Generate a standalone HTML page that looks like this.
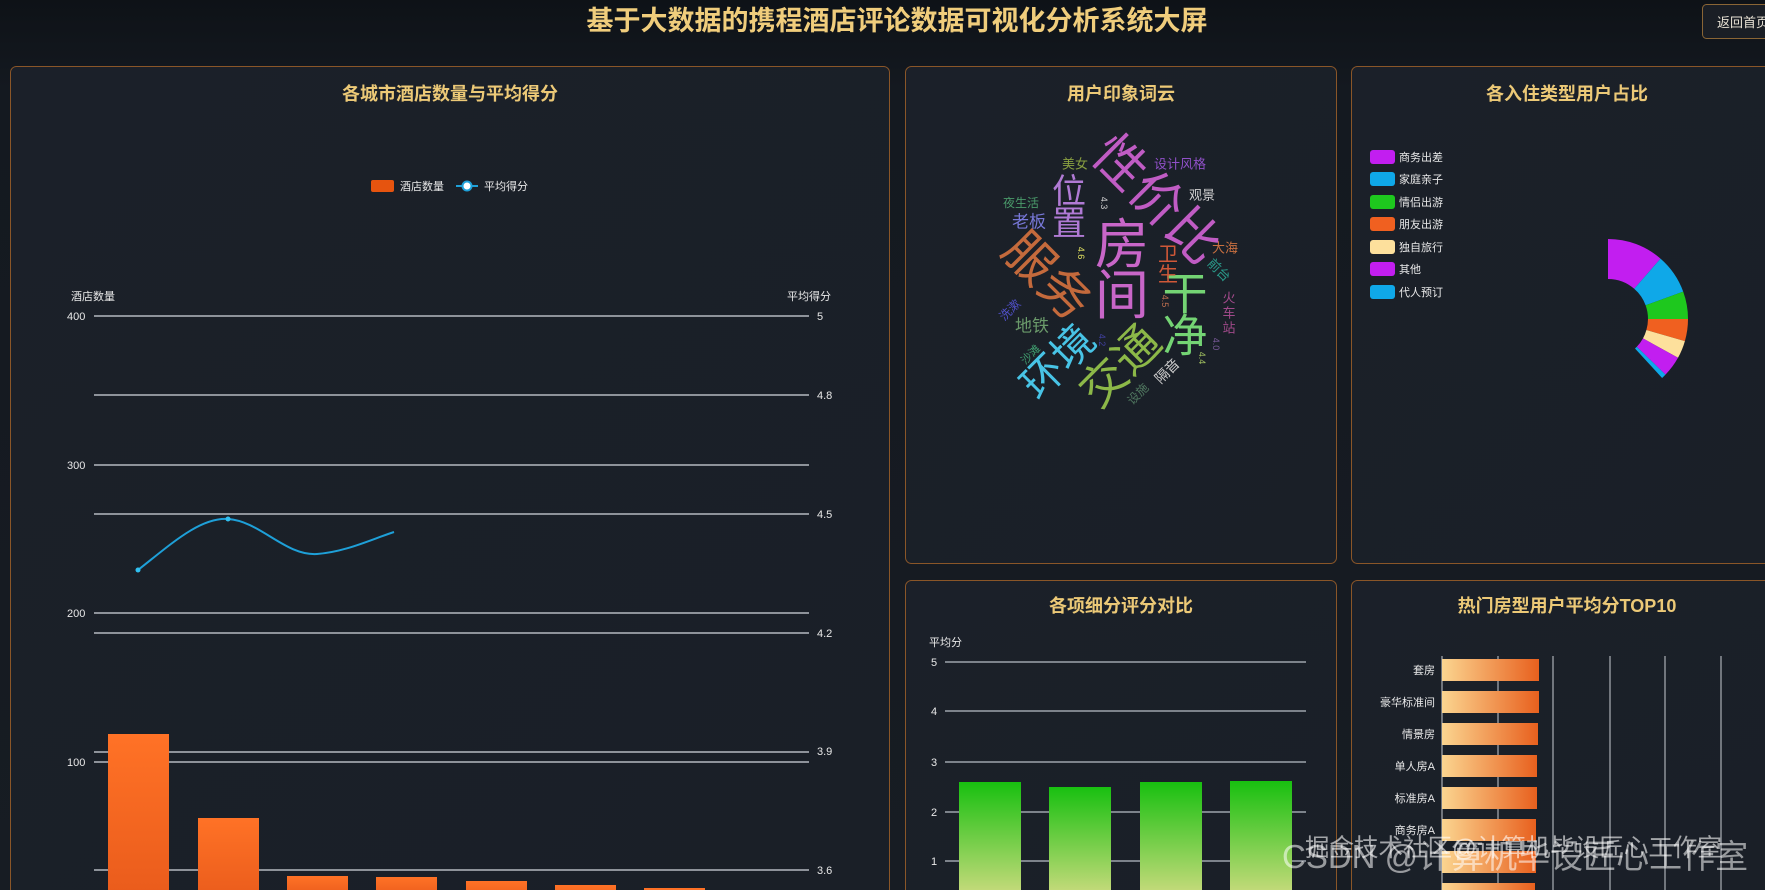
<!DOCTYPE html>
<html><head><meta charset="utf-8">
<style>
html,body{margin:0;padding:0;width:1765px;height:890px;overflow:hidden;background:#12161c;}
svg{display:block}
text{font-family:"Liberation Sans","Noto Sans CJK SC",sans-serif;}
</style></head><body>
<svg width="1765" height="890" viewBox="0 0 1765 890" xmlns="http://www.w3.org/2000/svg">
<defs>
<linearGradient id="bg" x1="0" y1="0" x2="0" y2="1"><stop offset="0" stop-color="#0e1217"/><stop offset="0.1" stop-color="#141920"/><stop offset="1" stop-color="#171c23"/></linearGradient>
<linearGradient id="pn" x1="0" y1="0" x2="1" y2="1"><stop offset="0" stop-color="#1b2029"/><stop offset="1" stop-color="#1a1f27"/></linearGradient>
<linearGradient id="ob" x1="0" y1="0" x2="0" y2="1"><stop offset="0" stop-color="#ff7226"/><stop offset="1" stop-color="#ea5c1c"/></linearGradient>
<linearGradient id="gb" x1="0" y1="0" x2="0" y2="1"><stop offset="0" stop-color="#18c010"/><stop offset="1" stop-color="#c4da7a"/></linearGradient>
<linearGradient id="hb" x1="0" y1="0" x2="1" y2="0"><stop offset="0" stop-color="#fbd590"/><stop offset="1" stop-color="#e8601e"/></linearGradient>
</defs>
<rect width="1765" height="890" fill="url(#bg)"/>
<text x="897" y="30" text-anchor="middle" font-size="27" font-weight="bold" fill="#f0cd7c">基于大数据的携程酒店评论数据可视化分析系统大屏</text>
<rect x="1702.5" y="4.5" width="80" height="34" rx="4" fill="#1a1e25" stroke="#8a6535"/>
<text x="1717" y="27" font-size="13" fill="#e8e2d5">返回首页</text>

<rect x="10.5" y="66.5" width="879" height="840" rx="6" fill="url(#pn)" stroke="#8a5628"/>
<rect x="905.5" y="66.5" width="431" height="497" rx="6" fill="url(#pn)" stroke="#8a5628"/>
<rect x="1351.5" y="66.5" width="431" height="497" rx="6" fill="url(#pn)" stroke="#8a5628"/>
<rect x="905.5" y="580.5" width="431" height="340" rx="6" fill="url(#pn)" stroke="#8a5628"/>
<rect x="1351.5" y="580.5" width="431" height="340" rx="6" fill="url(#pn)" stroke="#8a5628"/>

<g font-size="18" font-weight="bold" fill="#ecc977" text-anchor="middle">
<text x="450" y="100">各城市酒店数量与平均得分</text>
<text x="1121" y="100">用户印象词云</text>
<text x="1567" y="100">各入住类型用户占比</text>
<text x="1121" y="612">各项细分评分对比</text>
<text x="1567" y="612">热门房型用户平均分TOP10</text>
</g>

<rect x="371" y="180" width="23" height="12" rx="2" fill="#e6540f"/>
<text x="400" y="190" font-size="11" fill="#e8e8e8">酒店数量</text>
<line x1="456" y1="186" x2="478" y2="186" stroke="#1ea0d8" stroke-width="2"/>
<circle cx="467" cy="186" r="4.5" fill="#fff" stroke="#1ea0d8" stroke-width="2"/>
<text x="484" y="190" font-size="11" fill="#e8e8e8">平均得分</text>
<g font-size="11" fill="#e8e8e8">
<text x="71" y="300">酒店数量</text>
<text x="787" y="300">平均得分</text>
<text x="67" y="320">400</text><text x="67" y="469">300</text><text x="67" y="617">200</text><text x="67" y="766">100</text>
<text x="817" y="320">5</text><text x="817" y="399">4.8</text><text x="817" y="518">4.5</text><text x="817" y="637">4.2</text><text x="817" y="755">3.9</text><text x="817" y="874">3.6</text>
</g>
<g stroke="#d4d8de" stroke-width="1.2">
<line x1="94" y1="316" x2="809" y2="316"/><line x1="94" y1="395" x2="809" y2="395"/>
<line x1="94" y1="465" x2="809" y2="465"/><line x1="94" y1="514" x2="809" y2="514"/>
<line x1="94" y1="613" x2="809" y2="613"/><line x1="94" y1="633" x2="809" y2="633"/>
<line x1="94" y1="752" x2="809" y2="752"/><line x1="94" y1="762" x2="809" y2="762"/>
<line x1="94" y1="870" x2="809" y2="870"/>
</g>
<g fill="url(#ob)">
<rect x="108" y="734" width="61" height="160"/><rect x="198" y="818" width="61" height="80"/>
<rect x="287" y="876" width="61" height="20"/><rect x="376" y="877" width="61" height="20"/>
<rect x="466" y="881" width="61" height="20"/><rect x="555" y="885" width="61" height="20"/>
<rect x="644" y="888" width="61" height="20"/>
</g>
<path d="M138,570 C170,545 200,517 228,519 C260,521 285,556 317,554 C345,552 370,540 394,532" fill="none" stroke="#1ea0d8" stroke-width="2"/>
<circle cx="138" cy="570" r="2.5" fill="#30c0f0"/><circle cx="228" cy="519" r="2.5" fill="#30c0f0"/>

<g text-anchor="middle" dominant-baseline="central">
<text transform="translate(1156,200) rotate(45)" font-size="52" fill="#c05cc4">性价比</text>
<g font-size="54" fill="#c866c8"><text x="1122" y="245">房</text><text x="1122" y="296">间</text></g>
<text transform="translate(1047,276) rotate(45)" font-size="50" fill="#c46a3c">服务</text>
<g font-size="34" fill="#b07ad4"><text x="1069" y="192">位</text><text x="1069" y="224">置</text></g>
<g font-size="45" fill="#74d474"><text x="1185" y="294">干</text><text x="1185" y="336">净</text></g>
<text transform="translate(1120,366) rotate(-45)" font-size="46" fill="#8cb848">交通</text>
<text transform="translate(1058,362) rotate(-45)" font-size="42" fill="#48c4e6">环境</text>
<g font-size="20" fill="#d05838"><text x="1168" y="255">卫</text><text x="1168" y="275">生</text></g>
<text x="1032" y="326" font-size="17" fill="#6a9a6a">地铁</text>
<text x="1029" y="222" font-size="17" fill="#7878d8">老板</text>
<text x="1021" y="203" font-size="12" fill="#4a9a6a">夜生活</text>
<text x="1075" y="164" font-size="13" fill="#8aa040">美女</text>
<text x="1180" y="164" font-size="13" fill="#9050c8">设计风格</text>
<text x="1202" y="195" font-size="13" fill="#d0d0d0">观景</text>
<text x="1225" y="248" font-size="13" fill="#c87040">大海</text>
<text transform="translate(1219,270) rotate(45)" font-size="13" fill="#2a9a8a">前台</text>
<g font-size="13" fill="#a04a8a"><text x="1229" y="298">火</text><text x="1229" y="313">车</text><text x="1229" y="328">站</text></g>
<text transform="translate(1010,310) rotate(-45)" font-size="12" fill="#5050c8">洗漱</text>
<text transform="translate(1031,355) rotate(-45)" font-size="11" fill="#40a070">沙滩</text>
<text transform="translate(1167,371) rotate(-45)" font-size="14" fill="#d0d0d0">隔音</text>
<text transform="translate(1138,394) rotate(-45)" font-size="12" fill="#507860">设施</text>
<text transform="translate(1104,203) rotate(90)" font-size="9" fill="#d0d0d0">4.3</text>
<text transform="translate(1081,253) rotate(90)" font-size="9" fill="#e0e060">4.6</text>
<text transform="translate(1165,301) rotate(90)" font-size="9" fill="#c07050">4.5</text>
<text transform="translate(1202,358) rotate(90)" font-size="9" fill="#a0c060">4.4</text>
<text transform="translate(1216,344) rotate(90)" font-size="9" fill="#7a5a9a">4.0</text>
<text transform="translate(1102,340) rotate(90)" font-size="9" fill="#4040a0">4.2</text>
</g>

<g font-size="11" fill="#e8e8e8">
<rect x="1370" y="150" width="25" height="14" rx="3" fill="#c21ef0"/><text x="1399" y="161">商务出差</text>
<rect x="1370" y="172" width="25" height="14" rx="3" fill="#0fa8e8"/><text x="1399" y="183">家庭亲子</text>
<rect x="1370" y="195" width="25" height="14" rx="3" fill="#1ec81e"/><text x="1399" y="206">情侣出游</text>
<rect x="1370" y="217" width="25" height="14" rx="3" fill="#f06020"/><text x="1399" y="228">朋友出游</text>
<rect x="1370" y="240" width="25" height="14" rx="3" fill="#fde09c"/><text x="1399" y="251">独自旅行</text>
<rect x="1370" y="262" width="25" height="14" rx="3" fill="#c21ef0"/><text x="1399" y="273">其他</text>
<rect x="1370" y="285" width="25" height="14" rx="3" fill="#0fa8e8"/><text x="1399" y="296">代人预订</text>
</g>
<path d="M1608,239 A80,80 0 0 1 1660.5,258.6 L1634.2,288.8 A40,40 0 0 0 1608,279 Z" fill="#c21ef0"/>
<path d="M1660.5,258.6 A80,80 0 0 1 1683.2,291.6 L1645.6,305.3 A40,40 0 0 0 1634.2,288.8 Z" fill="#0fa8e8"/>
<path d="M1683.2,291.6 A80,80 0 0 1 1688,319 L1648,319 A40,40 0 0 0 1645.6,305.3 Z" fill="#1ec81e"/>
<path d="M1688,319 A80,80 0 0 1 1684.9,341.1 L1646.4,330 A40,40 0 0 0 1648,319 Z" fill="#f06020"/>
<path d="M1684.9,341.1 A80,80 0 0 1 1678,357.8 L1643,338.4 A40,40 0 0 0 1646.4,330 Z" fill="#fde09c"/>
<path d="M1678,357.8 A80,80 0 0 1 1665.5,374.6 L1636.8,346.8 A40,40 0 0 0 1643,338.4 Z" fill="#c21ef0"/>
<path d="M1665.5,374.6 A80,80 0 0 1 1662.1,378 L1635,348.5 A40,40 0 0 0 1636.8,346.8 Z" fill="#0fa8e8"/>

<g font-size="11" fill="#e8e8e8">
<text x="929" y="646">平均分</text>
<text x="931" y="666">5</text><text x="931" y="715">4</text><text x="931" y="766">3</text><text x="931" y="816">2</text><text x="931" y="865">1</text>
</g>
<g stroke="#b8bec6" stroke-width="1.2">
<line x1="945" y1="662" x2="1306" y2="662"/><line x1="945" y1="711" x2="1306" y2="711"/>
<line x1="945" y1="762" x2="1306" y2="762"/><line x1="945" y1="812" x2="1306" y2="812"/>
<line x1="945" y1="861" x2="1306" y2="861"/>
</g>
<g fill="url(#gb)">
<rect x="959" y="782" width="62" height="110"/><rect x="1049" y="787" width="62" height="105"/>
<rect x="1140" y="782" width="62" height="110"/><rect x="1230" y="781" width="62" height="111"/>
</g>

<g stroke="#c8ccd2" stroke-width="1">
<line x1="1442" y1="656" x2="1442" y2="890"/><line x1="1498" y1="656" x2="1498" y2="890"/>
<line x1="1553" y1="656" x2="1553" y2="890"/><line x1="1610" y1="656" x2="1610" y2="890"/>
<line x1="1665" y1="656" x2="1665" y2="890"/><line x1="1721" y1="656" x2="1721" y2="890"/>
</g>
<g fill="url(#hb)">
<rect x="1442" y="659" width="97" height="22"/><rect x="1442" y="691" width="97" height="22"/>
<rect x="1442" y="723" width="96" height="22"/><rect x="1442" y="755" width="95" height="22"/>
<rect x="1442" y="787" width="95" height="22"/><rect x="1442" y="819" width="94" height="22"/>
<rect x="1442" y="851" width="94" height="22"/><rect x="1442" y="883" width="93" height="22"/>
</g>
<g font-size="11" fill="#e8e8e8" text-anchor="end">
<text x="1435" y="674">套房</text><text x="1435" y="706">豪华标准间</text><text x="1435" y="738">情景房</text>
<text x="1435" y="770">单人房A</text><text x="1435" y="802">标准房A</text><text x="1435" y="834">商务房A</text>
</g>
<text x="1282" y="868" font-size="33" fill="#ffffff" fill-opacity="0.55">CSDN @计算机毕设匠心工作室</text>
<text x="1305" y="856" font-size="24.5" fill="#ffffff" fill-opacity="0.6">掘金技术社区@计算机毕设匠心工作室</text>
</svg>
</body></html>
